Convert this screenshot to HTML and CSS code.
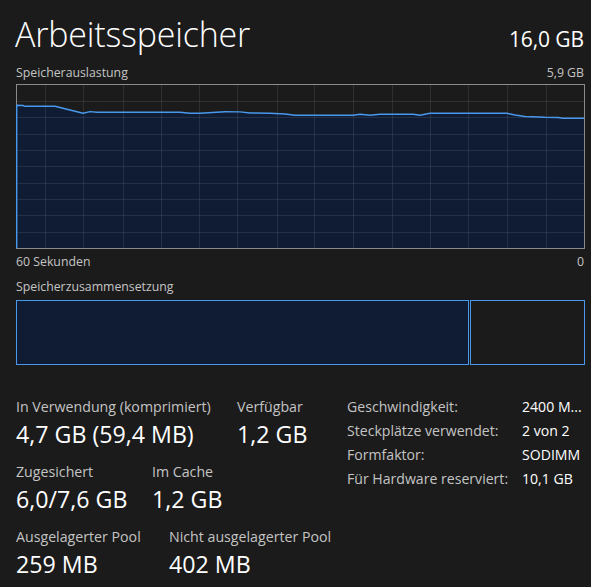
FILE: index.html
```html
<!DOCTYPE html>
<html lang="de">
<head>
<meta charset="utf-8">
<title>Arbeitsspeicher</title>
<link rel="stylesheet" href="styles.css">
</head>
<body>
<div class="page">
  <div class="header">
    <div class="title">Arbeitsspeicher</div>
    <div class="total">16,0 GB</div>
  </div>
  <div class="subrow">
    <span>Speicherauslastung</span>
    <span>5,9 GB</span>
  </div>
  <svg class="graph" width="569" height="165" viewBox="0 0 569 165">
    <rect x="0" y="0" width="569" height="165" fill="#1b1b1b"/>
    <polygon fill="#0f1c33" points="0,21.3 7,21.5 9,22.3 39,22.3 46,24 54,26 67,29.3 74,27.6 81,28.2 164,28.3 174,29.3 184,29.3 209,27.7 224,27.9 234,29 254,29.2 269,30 279,31.3 337,31.3 344,30.3 354,31.3 364,30.3 397,30.3 404,31.3 414,29.3 491,29.3 499,31 509,32.5 529,33.3 542,33.5 547,34.3 568,34.3 568,164 0,164"/>
    <path d="M29.5 0V165M67.5 0V165M107.5 0V165M145.5 0V165M183.5 0V165M221.5 0V165M261.5 0V165M298.5 0V165M337.5 0V165M376.5 0V165M414.5 0V165M452.5 0V165M491.5 0V165M530.5 0V165M0 17.5H569M0 33.5H569M0 50.5H569M0 66.5H569M0 82.5H569M0 99.5H569M0 115.5H569M0 131.5H569M0 148.5H569" stroke="#ffffff" stroke-opacity="0.09" stroke-width="1" fill="none"/>
    <rect x="0.5" y="0.5" width="568" height="164" fill="none" stroke="#8a8a8a" stroke-width="1"/>
    <polyline fill="none" stroke="#4a98ec" stroke-width="1.4" stroke-linejoin="round" points="0.7,164 0.7,21.3 7,21.5 9,22.3 39,22.3 46,24 54,26 67,29.3 74,27.6 81,28.2 164,28.3 174,29.3 184,29.3 209,27.7 224,27.9 234,29 254,29.2 269,30 279,31.3 337,31.3 344,30.3 354,31.3 364,30.3 397,30.3 404,31.3 414,29.3 491,29.3 499,31 509,32.5 529,33.3 542,33.5 547,34.3 568,34.3"/>
  </svg>
  <div class="subrow axis">
    <span>60 Sekunden</span>
    <span>0</span>
  </div>
  <div class="subrow comp-label">
    <span>Speicherzusammensetzung</span>
  </div>
  <div class="bar">
    <div class="seg used"></div>
    <div class="seg free"></div>
  </div>
  <div class="stats">
    <div class="left">
      <div class="row">
        <div class="col c1a"><div class="lbl">In Verwendung (komprimiert)</div><div class="val">4,7 GB (59,4 MB)</div></div>
        <div class="col"><div class="lbl">Verfügbar</div><div class="val">1,2 GB</div></div>
      </div>
      <div class="row">
        <div class="col c2a"><div class="lbl">Zugesichert</div><div class="val">6,0/7,6 GB</div></div>
        <div class="col"><div class="lbl">Im Cache</div><div class="val">1,2 GB</div></div>
      </div>
      <div class="row">
        <div class="col c3a"><div class="lbl">Ausgelagerter Pool</div><div class="val">259 MB</div></div>
        <div class="col"><div class="lbl">Nicht ausgelagerter Pool</div><div class="val">402 MB</div></div>
      </div>
    </div>
    <div class="right">
      <div class="kv"><span class="k">Geschwindigkeit:</span><span class="v">2400 M...</span></div>
      <div class="kv"><span class="k">Steckplätze verwendet:</span><span class="v">2 von 2</span></div>
      <div class="kv"><span class="k">Formfaktor:</span><span class="v">SODIMM</span></div>
      <div class="kv"><span class="k">Für Hardware reserviert:</span><span class="v">10,1 GB</span></div>
    </div>
  </div>
</div>
</body>
</html>
```
FILE: styles.css
```css
html, body {
  margin: 0;
  padding: 0;
  background: #1b1b1b;
}
body {
  font-family: "Open Sans", "Noto Sans", sans-serif;
  color: #ffffff;
  width: 591px;
  height: 587px;
  overflow: hidden;
}
.page {
  padding: 14px 7px 0 16px;
}
.header {
  display: flex;
  justify-content: space-between;
  align-items: baseline;
  height: 40px;
}
.title {
  font-size: 34px;
  font-weight: 300;
  line-height: 40px;
  letter-spacing: -0.2px;
  margin-left: -1px;
}
.total {
  font-size: 21px;
  line-height: 26px;
  font-weight: 400;
  letter-spacing: -0.1px;
}
.subrow {
  display: flex;
  justify-content: space-between;
  font-size: 12.3px;
  line-height: 16px;
  color: #c4c4c4;
  margin-top: 11px;
  height: 16px;
}
.graph {
  display: block;
  margin-top: 3px;
}
.subrow.axis {
  margin-top: 5px;
}
.subrow.comp-label {
  margin-top: 9px;
}
.bar {
  display: flex;
  gap: 1px;
  height: 65px;
  margin-top: 5px;
  width: 569px;
}
.seg {
  box-sizing: border-box;
  border: 1px solid #4a98ec;
  height: 65px;
}
.seg.used {
  width: 453px;
  background: #0f1c33;
}
.seg.free {
  width: 115px;
  background: #1b1b1b;
}
.stats {
  display: flex;
  margin-top: 29px;
}
.left {
  width: 331px;
  padding-top: 3px;
}
.row {
  display: flex;
  height: 65px;
}
.col {
  display: flex;
  flex-direction: column;
}
.c1a { width: 221px; }
.c2a { width: 136px; }
.c3a { width: 153px; }
.lbl {
  font-size: 14.2px;
  line-height: 20px;
  color: #c4c4c4;
  white-space: nowrap;
}
.val {
  font-size: 23.2px;
  line-height: 28px;
  margin-top: 3px;
  white-space: nowrap;
}
.right {
  padding-top: 1px;
  font-size: 14.1px;
}
.kv {
  display: flex;
  line-height: 24px;
  white-space: nowrap;
}
.k {
  width: 175px;
  color: #c4c4c4;
}
.v {
  color: #ffffff;
}
```
